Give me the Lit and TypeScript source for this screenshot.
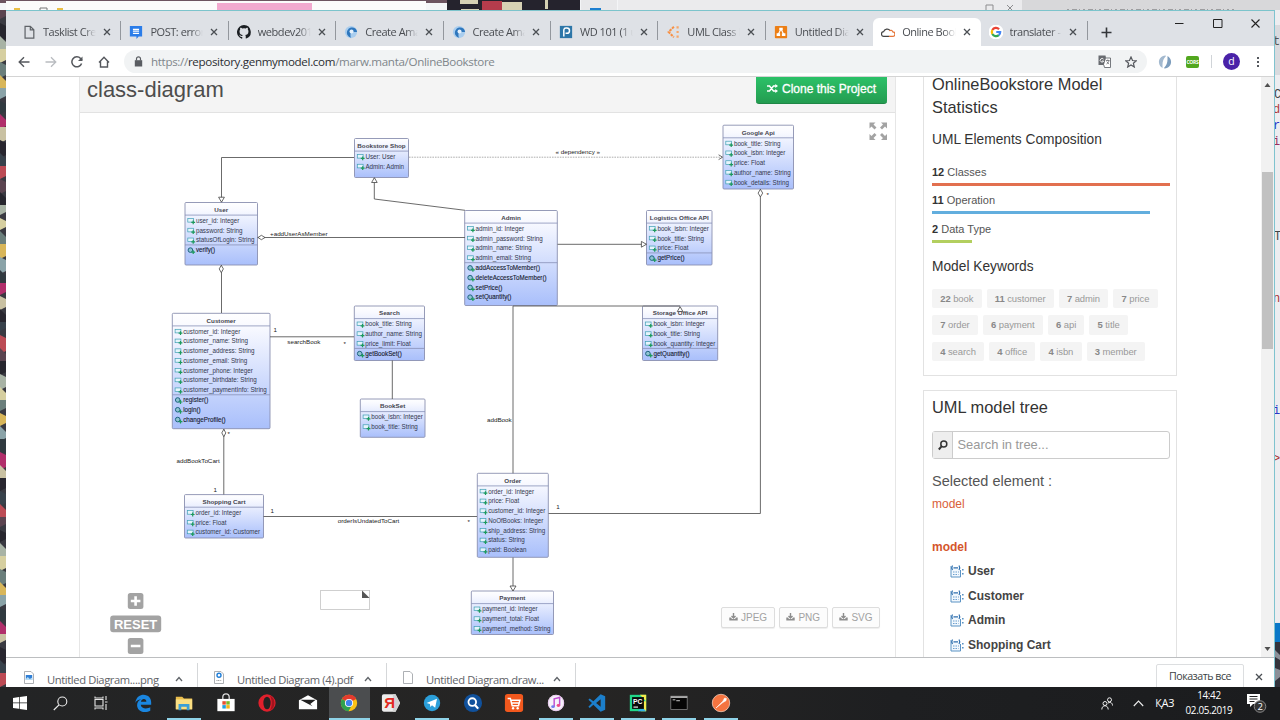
import { LitElement, html, svg, css } from "lit";
import { customElement } from "lit/decorators.js";

interface UmlClass {
  name: string;
  x: number;
  y: number;
  w: number;
  h: number;
  attrs: string[];
  ops?: string[];
}

const CLASSES: UmlClass[] = [
  { name: "Bookstore Shop", x: 354.5, y: 138.5, w: 54, h: 39, attrs: ["User: User", "Admin: Admin"] },
  { name: "User", x: 185, y: 202.5, w: 72.5, h: 62.5, attrs: ["user_id: Integer", "password: String", "statusOfLogin: String"], ops: ["verify()"] },
  { name: "Customer", x: 172.3, y: 313.3, w: 97.7, h: 115.4, attrs: ["customer_id: Integer", "customer_name: String", "customer_address: String", "customer_email: String", "customer_phone: Integer", "customer_birthdate: String", "customer_paymentInfo: String"], ops: ["register()", "login()", "changeProfile()"] },
  { name: "Search", x: 354.3, y: 306, w: 70.2, h: 54.5, attrs: ["book_title: String", "author_name: String", "price_limit: Float"], ops: ["getBookSet()"] },
  { name: "BookSet", x: 360.3, y: 399, w: 64.7, h: 38.3, attrs: ["book_isbn: Integer", "book_title: String"] },
  { name: "Shopping Cart", x: 184.5, y: 494.6, w: 79, h: 43.4, attrs: ["order_id: Integer", "price: Float", "customer_id: Customer"] },
  { name: "Admin", x: 464.7, y: 210.5, w: 92.6, h: 95, attrs: ["admin_id: Integer", "admin_password: String", "admin_name: String", "admin_email: String"], ops: ["addAccessToMember()", "deleteAccessToMember()", "setPrice()", "setQuantity()"] },
  { name: "Logistics Office API", x: 646.5, y: 210.5, w: 65.5, h: 54.5, attrs: ["book_isbn: Integer", "book_title: String", "price: Float"], ops: ["getPrice()"] },
  { name: "Storage Office API", x: 642.5, y: 306, w: 75.2, h: 54.5, attrs: ["book_isbn: Integer", "book_title: String", "book_quantity: Integer"], ops: ["getQuantity()"] },
  { name: "Order", x: 477.3, y: 473.3, w: 71, h: 84, attrs: ["order_id: Integer", "price: Float", "customer_id: Integer", "NoOfBooks: Integer", "ship_address: String", "status: String", "paid: Boolean"] },
  { name: "Payment", x: 471.3, y: 591, w: 82.2, h: 43.5, attrs: ["payment_id: Integer", "payment_total: Float", "payment_method: String"] },
  { name: "Google Api", x: 723, y: 125.2, w: 70.5, h: 63.8, attrs: ["book_title: String", "book_isbn: Integer", "price: Float", "author_name: String", "book_details: String"] },
];

const EDGES = [
  "M354 157.5H221.5V202",
  "M465 210.3L374.3 199V178",
  "M257.5 237.5H465",
  "M221.5 265V313",
  "M270 336.8H354",
  "M392.3 360.5V399",
  "M223.8 429V494.5",
  "M263.5 516.5H477",
  "M557.5 244.3H646.5",
  "M513 473.3V306H680",
  "M513 557.5V591",
  "M548.5 513.5H760.4V189",
];

const LABELS: [number, number, string][] = [
  [270, 235.5, "+addUserAsMember"],
  [555.5, 153.7, "« dependency »"],
  [273.5, 332, "1"],
  [287.3, 344, "searchBook"],
  [343.6, 345.8, "*"],
  [227.5, 435.5, "*"],
  [176.6, 462.8, "addBookToCart"],
  [213.5, 492.3, "1"],
  [270.5, 513.3, "1"],
  [337.8, 523.3, "orderIsUndatedToCart"],
  [467.5, 523.5, "*"],
  [556.3, 509.4, "1"],
  [487, 421.6, "addBook"],
  [766.5, 196.5, "*"],
];

const ROW = 9.77;

@customElement("uml-diagram")
export class UmlDiagram extends LitElement {
  static styles = css`
    :host { display: block; }
    svg { display: block; font-family: "Liberation Sans", Arial, sans-serif; }
    .edge { fill: none; stroke: #5a5a5a; stroke-width: 0.9; }
    .dash { stroke: #999; stroke-dasharray: 1.6 1; stroke-width: 0.8; }
    .head { fill: #fff; stroke: #444; stroke-width: 0.8; }
    .box { fill: url(#g); stroke: #8a90b0; stroke-width: 0.9; }
    .rule { stroke: #8890b8; stroke-width: 0.8; }
    .name { font-size: 6.25px; font-weight: 700; fill: #44444e; text-anchor: middle; }
    .attr { font-size: 6.27px; fill: #33384e; }
    .op { font-size: 6.27px; fill: #14182c; stroke: #14182c; stroke-width: 0.1; }
    .label { font-size: 6.25px; fill: #222; }
  `;

  private node(c: UmlClass) {
    const tx = c.x + 10.9;
    const first = c.y + 18.2;
    const ops = c.ops ?? [];
    const split = first + c.attrs.length * ROW - 5.1;
    return svg`
      <rect class="box" x=${c.x} y=${c.y} width=${c.w} height=${c.h} rx="1"></rect>
      <path class="rule" d="M${c.x} ${c.y + 12.6}h${c.w}"></path>
      <text class="name" x=${c.x + c.w / 2} y=${c.y + 9.3}>${c.name}</text>
      ${c.attrs.map((a, i) => {
        const y = first + i * ROW;
        return svg`
          <rect x=${c.x + 2.8} y=${y - 2.2} width="5.8" height="3.6" fill="#e6f4fb" stroke="#3e9fb4" stroke-width=".7"></rect>
          <path d="M${tx - 4.6} ${y + 1.7}h3.8M${tx - 2.7} ${y - 0.2}v3.8" stroke="#1d9a5c" stroke-width="1.2"></path>
          <text class="attr" x=${tx} y=${y + 2.1}>${a}</text>`;
      })}
      ${ops.length ? svg`<path class="rule" d="M${c.x} ${split}h${c.w}"></path>` : ""}
      ${ops.map((o, i) => {
        const y = first + (c.attrs.length + i) * ROW + 0.3;
        return svg`
          <circle cx=${c.x + 5.4} cy=${y - 0.2} r="2.3" fill="#8fc3d2" stroke="#1f6480" stroke-width="1"></circle>
          <path d="M${tx - 4.6} ${y + 1.8}h3.8M${tx - 2.7} ${y - 0.1}v3.8" stroke="#1d9a5c" stroke-width="1.2"></path>
          <text class="op" x=${tx} y=${y + 2.1}>${o}</text>`;
      })}`;
  }

  render() {
    return html`<svg width="816" height="544" viewBox="80 113 816 544">
      <defs>
        <linearGradient id="g" x1="0" y1="0" x2="0" y2="1">
          <stop offset="0" stop-color="#ffffff"></stop>
          <stop offset=".12" stop-color="#f8f9ff"></stop>
          <stop offset="1" stop-color="#a9bffb"></stop>
        </linearGradient>
      </defs>
      ${CLASSES.map((c) => this.node(c))}
      ${EDGES.map((d) => svg`<path class="edge" d=${d}></path>`)}
      <path class="edge dash" d="M409 157.2H722"></path>
      <path class="head" d="M218.6 197.2h5.8l-2.9 5zM371.6 182.5h5.6l-2.8-4.8zM641.4 241.4v5.8l5-2.9zM677.3 311.5h5.6l-2.8-4.8zM510 586h6l-3 5zM258 237.5l3.4-2.2 3.6 2.2-3.6 2.2zM221.3 265.3l2.1 3.6-2.1 3.8-2.1-3.8zM223.8 429.3l2 3.6-2 3.8-2-3.8zM760.4 189.3l2.3 3.8-2.3 3.8-2.3-3.8z"></path>
      <path class="edge" d="M718.6 154.8l4 2.4-4 2.4"></path>
      ${LABELS.map(([x, y, t]) => svg`<text class="label" x=${x} y=${y}>${t}</text>`)}
      <rect x="320.6" y="590.6" width="49" height="19" fill="#fff" stroke="#c4c4c4" stroke-width=".8"></rect>
      <path d="M362 590.6l7.6 7.4H362z" fill="#555"></path>
      <g fill="#a3a3a3">
        <path d="M869.5 122.5h6l-2 2 3 3-2 2-3-3-2 2zM887 122.5h-6l2 2-3 3 2 2 3-3 2 2zM869.5 140h6l-2-2 3-3-2-2-3 3-2-2zM887 140h-6l2-2-3-3 2-2 3 3 2-2z"></path>
        <rect x="127.8" y="593" width="15.6" height="16" rx="2.5"></rect>
        <rect x="110.2" y="615.4" width="51" height="16.8" rx="3"></rect>
        <rect x="127.8" y="638" width="15.6" height="16" rx="2.5"></rect>
      </g>
      <path d="M130.8 601h9.6M135.6 596.2v9.6M130.8 646h9.6" stroke="#fff" stroke-width="2.6"></path>
      <text x="135.6" y="628.5" text-anchor="middle" font-size="13" font-weight="700" fill="#fff">RESET</text>
    </svg>`;
  }
}

const createIcon = svg`<circle cx="8" cy="8" r="7" fill="#a9cdee"></circle><path d="M13 4A6 6 0 1 0 8 14.6 9 9 0 0 1 8 8h7A7 7 0 0 0 13 4z" fill="#2f77bd"></path><circle cx="8.6" cy="7.4" r="2.3" fill="#e4f0fb"></circle>`;

const FAVICONS = {
  page: svg`<path d="M3.500 1.500h6l4 4v9.500h-10zM9.500 1.500v4h4" fill="none" stroke="#5f6368" stroke-width="1.4"></path>`,
  post: svg`<path d="M1 1h14v12h-4l-2.500 3v-3H1z" fill="#2b7de9"></path><path d="M4.500 5h7M4.500 7h7M4.500 9.500h7" stroke="#fff" stroke-width="1.3"></path>`,
  github: svg`<path d="M8 0a8 8 0 0 0-2.500 15.600c.4.1.5-.2.5-.4v-1.500c-2.200.5-2.700-1-2.700-1-.4-.9-.9-1.200-.9-1.200-.7-.5.1-.5.1-.5.8.1 1.200.8 1.200.8.7 1.200 1.900.9 2.300.7.1-.5.300-.9.500-1.100-1.800-.2-3.600-.9-3.600-4 0-.9.300-1.600.8-2.200-.1-.2-.4-1 .1-2.100 0 0 .7-.2 2.200.8a7.500 7.500 0 0 1 4 0c1.500-1 2.200-.8 2.200-.8.4 1.100.200 1.900.1 2.100.5.600.8 1.300.8 2.200 0 3.100-1.900 3.800-3.700 4 .300.300.6.7.6 1.500v2.200c0 .2.100.5.500.4A8 8 0 0 0 8 0z" fill="#1b1f23"></path>`,
  create: createIcon,
  p: svg`<rect x="1" y="1" width="14" height="14" fill="#2d76a8"></rect><path d="M5.500 13V5.500A2.500 2.500 0 0 1 8 3.500h1a3 3 0 0 1 0 6H7.500" fill="none" stroke="#fff" stroke-width="1.7"></path>`,
  uml: svg`<path d="M9 2L3 8l6 6" fill="none" stroke="#f79044" stroke-width="2.300" stroke-dasharray="3 1"></path><path d="M12 1.500h2.500v2.500H12zM12 6.800h2.500v2.400H12zM12 12h2.500v2.500H12z" fill="#f7a567"></path>`,
  drawio: svg`<rect x="1" y="1" width="14" height="14" rx="1" fill="#ec7f16"></rect><path d="M8 4.500L4.500 11.500M8 4.500l3.500 7" stroke="#fff" stroke-width="1.300"></path><path d="M6 3h4v3H6zM3 9.500h4v3H3zM9 9.500h4v3H9z" fill="#fff"></path>`,
  cloud: svg`<path d="M9.500 13H3.500A2.700 2.700 0 0 1 3 7.600C4 4.500 8.500 3.500 10.300 6.500" fill="none" stroke="#444" stroke-width="1.400"></path><path d="M9 13h4.200a2.600 2.600 0 0 0 .3-5.200C13 6 11 5.600 9.500 6.600" fill="none" stroke="#e5763a" stroke-width="1.400"></path>`,
  google: svg`<circle cx="8" cy="8" r="8.500" fill="#fff"></circle><g fill="none" stroke-width="2.500"><path d="M11.500 4.800A4.800 4.800 0 0 0 3.800 5.700" stroke="#ea4335"></path><path d="M3.800 5.700a4.800 4.800 0 0 0 0 4.600" stroke="#fbbc05"></path><path d="M3.800 10.300a4.800 4.800 0 0 0 7.400 1.300" stroke="#34a853"></path><path d="M11.200 11.600A4.800 4.800 0 0 0 12.800 8H8.300" stroke="#4285f4"></path></g>`,
};

const TABS: { icon: keyof typeof FAVICONS; text: string; active?: boolean; line?: boolean }[] = [
  { icon: "page", text: "Tasklist Creation", line: true },
  { icon: "post", text: "POST: error code", line: true },
  { icon: "github", text: "webdev2019/task", line: true },
  { icon: "create", text: "Create Amazing", line: true },
  { icon: "create", text: "Create Amazing", line: true },
  { icon: "p", text: "WD 101 (1 unread", line: true },
  { icon: "uml", text: "UML Class Diagr", line: true },
  { icon: "drawio", text: "Untitled Diagram" },
  { icon: "cloud", text: "Online Bookstore", active: true },
  { icon: "google", text: "translater - Поиск", line: true },
];

const STATS = [
  { n: 12, label: "Classes", width: 238, color: "#e2704f" },
  { n: 11, label: "Operation", width: 218.3, color: "#62aede" },
  { n: 2, label: "Data Type", width: 39.6, color: "#b3cf5f" },
];

const KEYWORDS: [number, string][][] = [
  [[22, "book"], [11, "customer"], [7, "admin"], [7, "price"]],
  [[7, "order"], [6, "payment"], [6, "api"], [5, "title"]],
  [[4, "search"], [4, "office"], [4, "isbn"], [3, "member"]],
];

const TREE = ["User", "Customer", "Admin", "Shopping Cart"];

const APPS: { art: unknown; open?: boolean; active?: boolean }[] = [
  { art: svg`<path d="M1.500 10C2.500 3 7 1 10.500 1 16 1 19 5 19 9.500V12H7.500c.3 3 3 4 5.500 4 2 0 3.700-.5 5-1.300v3.800C16.500 19.500 14.500 20 12 20 6.500 20 3.500 16.500 3.500 12.500c0-3 1.700-5.300 4.500-6.500C4.500 6.500 2.500 8 1.500 10zM7.800 8.500h5.900C13.700 6.500 12.500 5.500 11 5.500S8 6.500 7.800 8.500z" fill="#1a86e0"></path>` },
  { art: svg`<path d="M1 3h7l2 2h9v12H1z" fill="#e9bd4c"></path><path d="M1 6h18v11H1z" fill="#fbdf83"></path><path d="M4 18v-7h12v7h-3v-4H7v4z" fill="#3c9fd6"></path>`, open: true },
  { art: svg`<path d="M6.500 6V3.500a3.500 3.500 0 0 1 7 0V6" fill="none" stroke="#ddd" stroke-width="1.400"></path><path d="M0.500 5.500h19V19h-19z" fill="#fff"></path><path d="M6 8h3.800v3.800H6z" fill="#e8502f"></path><path d="M10.300 8h3.800v3.800h-3.800z" fill="#7cb928"></path><path d="M6 12.300h3.800v3.800H6z" fill="#219fdf"></path><path d="M10.300 12.300h3.800v3.800h-3.800z" fill="#f6b619"></path>` },
  { art: svg`<ellipse cx="10" cy="10" rx="9.500" ry="9.500" fill="#e0202c"></ellipse><ellipse cx="10" cy="10" rx="4" ry="7" fill="#232323"></ellipse><path d="M13 1.500a9.500 9.500 0 0 1 0 17c3-5 3-12 0-17z" fill="#a3131d"></path>` },
  { art: svg`<path d="M0 7l10-5.500L20 7v10H0z" fill="#fff"></path><path d="M1.500 6.300h17L12.500 11 15 13.500z" fill="#222"></path>` },
  { art: svg`<circle cx="10" cy="10" r="9" fill="#fbc116"></circle><path d="M10 10L2.200 5.500A9 9 0 0 1 17.800 5.500z" fill="#e33b2e"></path><path d="M10 10L2.200 5.500A9 9 0 0 0 9.500 19l4-7z" fill="#30a14e"></path><path d="M10 5.500h8a9 9 0 0 0-8-4.500z" fill="#e33b2e"></path><circle cx="10" cy="10" r="4.500" fill="#fff"></circle><circle cx="10" cy="10" r="3.500" fill="#3f83ee"></circle>`, open: true, active: true },
  { art: svg`<path d="M2 0.500h13L20 10l-5 9.500H2a2 2 0 0 1-2-2v-15a2 2 0 0 1 2-2z" fill="#ececec"></path><path d="M12 0.500h3L20 10l-5 9.500h-3z" fill="#d2d2d2"></path><text x="2.500" y="16" font-size="16.500" font-weight="700" fill="#e22b22" font-family="Liberation Sans, sans-serif">Я</text>` },
  { art: svg`<circle cx="10" cy="10" r="9" fill="#2b9fda"></circle><path d="M4 10l11.500-4.800-2 10-3.500-2.600-1.800 1.800-.5-3.200z" fill="#fff"></path>`, open: true },
  { art: svg`<circle cx="10" cy="10" r="10" fill="#10519c"></circle><circle cx="9.200" cy="9" r="4.200" fill="none" stroke="#fff" stroke-width="2"></circle><path d="M12.200 12.200l3.500 4" stroke="#fff" stroke-width="2.400"></path>` },
  { art: svg`<rect x="0" y="0" width="20" height="20" rx="3" fill="#f2581d"></rect><path d="M3 5h3l2 8h7l1.500-6H7M8 10h8" fill="none" stroke="#fff" stroke-width="1.600"></path><circle cx="9" cy="15.800" r="1.300" fill="#fff"></circle><circle cx="14" cy="15.800" r="1.300" fill="#fff"></circle>` },
  { art: svg`<circle cx="10" cy="10" r="9" fill="#f6f2fa"></circle><circle cx="10" cy="10" r="8.400" fill="none" stroke="#e7c6ec" stroke-width="1"></circle><path d="M8 14V5.500l6-1.500v8.500" fill="none" stroke="#c04fd0" stroke-width="1.600"></path><ellipse cx="6.700" cy="14" rx="2" ry="1.600" fill="#6f7df0"></ellipse><ellipse cx="12.700" cy="12.700" rx="2" ry="1.600" fill="#ef4c86"></ellipse>`, open: true },
  { art: svg`<path d="M14 0.500l5 2v15l-5 2L6 12l-4 3.500L0.500 14 4.500 10 0.500 6.500 2 5l4 3zM14 6l-5 4 5 4z" fill="#1c7fcb"></path>`, open: true },
  { art: svg`<path d="M1 1h18v18H1z" fill="#21d789"></path><path d="M12 1h7v7zM14 8h5v11h-6z" fill="#f4ec4b"></path><path d="M10 19h9l-5-5z" fill="#31b5e8"></path><path d="M3.500 3.500h13v13h-13z" fill="#0a0a0a"></path><text x="4.600" y="10.800" font-size="7.500" font-weight="700" fill="#fff" font-family="Liberation Sans, sans-serif">PC</text><path d="M5 14.500h5" stroke="#fff" stroke-width="1.200"></path>`, open: true },
  { art: svg`<rect x="1" y="2.500" width="18" height="14.500" fill="#060606" stroke="#8b8b8b" stroke-width=".8"></rect><path d="M1 3.500h18" stroke="#cfcfcf" stroke-width="1.600"></path><path d="M3 6.500h3M7 7.500h4" stroke="#ddd" stroke-width="1"></path>`, open: true },
  { art: svg`<circle cx="10" cy="10" r="9.600" fill="#f57440" stroke="#fbd5c2" stroke-width=".8"></circle><path d="M4.500 15.500L12 8l2-3.500 2 .5-.5 2.500L12 9.500z" fill="#fff" stroke="#fff" stroke-width=".6"></path>`, open: true },
];

const chevron = html`<svg class="chev" width="8" height="6" viewBox="0 0 8 6"><path d="M1 5l3-3.500L7 5" fill="none" stroke="#5f6368" stroke-width="1.300"></path></svg>`;
const cross = html`<svg class="cross" width="8" height="8" viewBox="0 0 8 8"><path d="M1 1l6 6M7 1L1 7" stroke="#4b4f54" stroke-width="1.300"></path></svg>`;

@customElement("app-root")
export class AppRoot extends LitElement {
  static styles = css`
    :host {
      display: block; position: relative; width: 1280px; height: 720px; overflow: hidden;
      background: #e8e8ea; font-family: "Liberation Sans", Arial, sans-serif; color: #444;
    }
    * { box-sizing: border-box; }
    svg { display: block; flex: none; }
    .backdrop { position: absolute; left: 0; top: 0; }
    .window {
      position: relative; margin: 10px 5px 0 6px; height: 677px; display: flex; flex-direction: column;
      background: #fff; border-top: 1px solid #7cc4cc; border-right: 1px solid #7fc3cf; overflow: hidden;
    }
    .ui { font-family: "Open Sans", "Noto Sans", sans-serif; }

    .tabs { height: 35px; flex: none; background: #dee1e6; display: flex; padding-left: 8px; }
    .tab { width: 107.4px; margin-top: 7px; height: 28px; display: flex; align-items: center; padding: 0 9.500px 0 8px; }
    .tab.active { background: #fff; border-radius: 6px 6px 0 0; }
    .tab .label { flex: 1; min-width: 0; margin: 0 6px 0 7px; font-size: 11px; letter-spacing: -0.45px; color: #4a4d52; white-space: nowrap; overflow: hidden; line-height: 18px;
      mask-image: linear-gradient(90deg, #000 76%, transparent 98%); }
    .tab.line { border-right: 1px solid #93979d; border-image: linear-gradient(transparent 15%, #93979d 15%, #93979d 75%, transparent 75%) 1; }
    .plus { margin: 16px 0 0 13px; }
    .controls { margin: 4px 0 0 auto; display: flex; gap: 28.500px; padding: 4px 14px 0 0; }

    .bar { height: 30px; flex: none; display: flex; align-items: center; padding: 1px 0 0 12px; background: #fff; }
    .nav { display: flex; gap: 14.500px; align-items: center; width: 106px; }
    .pill { width: 1023px; height: 23.500px; background: #f1f3f4; border-radius: 12px; display: flex; align-items: center; padding: 0 10px; }
    .url { font-size: 11.600px; letter-spacing: -0.33px; color: #80868b; margin-left: 8px; flex: 1; white-space: nowrap; line-height: 20px; }
    .url b { font-weight: 400; color: #2b2e32; }
    .pill-icons { display: flex; gap: 14px; align-items: center; }
    .ext { display: flex; align-items: center; }
    .swirl { margin-left: 11px; }
    .cors { background: #52a71e; color: #fff; font-size: 5px; letter-spacing: -0.3px; font-weight: 700; width: 13px; height: 12px; line-height: 12px; border-radius: 2px; text-align: center; margin-left: 14px; }
    .avatar { width: 17px; height: 17px; border-radius: 50%; background: #4a22a8; color: #fff; font-size: 10.500px; line-height: 16px; text-align: center; margin: 0 16px 0 11px; }
    .vr { width: 1px; height: 13px; background: #d0d4d8; margin-left: 12px; }

    .page { height: 581px; flex: none; border-top: 1px solid #d4d4d4; display: flex; overflow: hidden; background: #fff; }
    .main { margin-left: 73px; width: 817px; border: solid #e6e6e6; border-width: 0 1px; position: relative; }
    .head { height: 36px; background: #f4f4f4; border-bottom: 1px solid #e2e2e2; display: flex; justify-content: space-between; padding: 0 8px 0 7px; }
    .head h1 { margin: 0; font-size: 22px; font-weight: 400; line-height: 26px; color: #4d4d4d; }
    .clone { width: 131px; height: 26.500px; border-radius: 0 0 3px 3px; background: linear-gradient(#2cc168, #239c50); border-bottom: 1px solid #1f8746; color: #fff; font-size: 12px; display: flex; gap: 4px; justify-content: center; padding-top: 5px; line-height: 14px; -webkit-text-stroke: 0.3px #fff; white-space: nowrap; }
    .clone svg { margin-top: 2px; }
    .exports { position: absolute; right: 15px; bottom: 29px; display: flex; gap: 4.300px; }
    .exports span { height: 21.500px; border: 1px solid #ddd; border-radius: 2px; padding: 0 6.500px; display: flex; gap: 3px; align-items: center; font-size: 10px; color: #a2a2a2; background: #fcfcfc; box-shadow: 0 1px 1px #eee; }

    .side { margin-left: 27px; width: 254px; display: flex; flex-direction: column; gap: 14px; }
    .card { border: 1px solid #e2e2e2; padding: 0 8px; flex: none; }
    .card.stats { height: 299px; border-top: 0; }
    .card.tree { height: 300px; }
    h2 { margin: 0; font-weight: 400; font-size: 16.400px; line-height: 22.500px; color: #333; }
    .stats h2 { margin-top: -4px; }
    h3 { margin: 11.500px 0 15px; font-weight: 400; font-size: 13.750px; line-height: 20px; color: #333; white-space: nowrap; }
    h3.kw { margin: 6.500px 0 12px; }
    .stat { height: 28.650px; font-size: 11px; line-height: 14px; color: #555; }
    .stat b { color: #333; }
    .meter { height: 3px; margin-top: 4px; }
    .tags { display: flex; gap: 5px; margin-bottom: 6.900px; }
    .tag { height: 19.500px; line-height: 19.500px; padding: 0 8.200px; background: #f4f4f4; border-radius: 2px; font-size: 9.450px; letter-spacing: -0.06px; color: #999; }
    .tag b { color: #888; }
    .tree h2 { padding-top: 5px; height: 28px; }
    .search { height: 28px; width: 238px; margin-top: 12px; border: 1px solid #ccc; border-radius: 3px; display: flex; font-size: 12.900px; line-height: 25px; color: #999; }
    .search i { width: 20px; background: #eee; border-right: 1px solid #ccc; margin-right: 4.500px; padding: 8px 0 0 5px; }
    .sel { font-size: 14.500px; line-height: 20px; margin-top: 12px; color: #555; }
    .link { font-size: 12px; line-height: 16px; margin-top: 5px; color: #d9603a; }
    .root { font-size: 12px; line-height: 16px; margin-top: 27px; margin-bottom: 4px; color: #d4562d; font-weight: 700; }
    .leaf { height: 24.600px; display: flex; align-items: center; gap: 4px; padding-left: 18px; font-size: 12px; font-weight: 700; color: #444; }
    .scroll { margin-left: auto; width: 13px; background: #f1f1f1; display: flex; flex-direction: column; }
    .scroll svg { margin: 5px 0 0 3px; }
    .thumb { height: 177px; background: #c1c1c1; margin: 84px 1px 0; }
    .scroll .down { margin-top: auto; margin-bottom: 5px; }

    .downloads { height: 30px; flex: none; border-top: 1px solid #bcbec0; display: flex; background: #fff; font-size: 11.200px; color: #5f6368; }
    .dl { display: flex; height: 29px; margin-top: 5px; align-items: center; border-right: 1px solid #d5d7d9; padding: 5px 14px 0 16px; }
    .dl:first-child { padding-left: 18px; }
    .dl span { margin-left: 13px; flex: 1; white-space: nowrap; line-height: 18px; letter-spacing: -0.39px; }
    .dl .file { margin-bottom: 5px; }
    .dl .chev { margin-bottom: 3px; }
    .all { margin: 6px 11px 0 auto; width: 88px; height: 30px; border: 1px solid #dcdee0; border-radius: 2px; text-align: center; line-height: 23px; font-size: 10.700px; letter-spacing: -0.5px; color: #3c3f44; white-space: nowrap; }
    .downloads .cross { margin: 15px 11px 0 0; }

    .taskbar { position: relative; height: 33px; background: linear-gradient(90deg, #232425, #262524 45%, #1e1f21 70%, #1b1c1e); display: flex; color: #fff; }
    .sys { display: flex; align-items: center; width: 122.400px; padding: 0 0 1px 13px; gap: 26px; }
    .app { width: 41.280px; display: flex; flex-direction: column; align-items: center; padding-top: 6px; }
    .app.active { background: #4b4d4f; }
    .app u { height: 2.500px; width: 34px; background: #8fd3e8; margin-top: auto; }
    .app.active u { width: 41px; }
    .tray { margin-left: auto; display: flex; align-items: center; font-size: 10.500px; padding: 0 13px 1px 0; }
    .clock { font-size: 9.900px; line-height: 15px; text-align: center; width: 50px; letter-spacing: -0.35px; margin: 0 13px 0 10px; white-space: nowrap; }
    .caret { margin-left: 20px; }
    .lang { margin-left: 11px; letter-spacing: -0.3px; }
  `;

  private backdrop() {
    const left = ["#5b4450", "#b12f6b", "#d6cfa0", "#38424c", "#8aa3a8", "#27262e", "#c9c1a2", "#6b7f7c", "#bc4b55", "#303a40", "#a8b3a5", "#28262f", "#d8b65a"];
    return html`<svg class="backdrop" width="1280" height="687" viewBox="0 0 1280 687">
      <rect width="1280" height="12" fill="#f4f5f7"></rect>
      <rect width="447" height="3" fill="#6d5460"></rect>
      <rect x="6" y="1" width="420" height="10" fill="#fbfbfb"></rect>
      <rect x="217" y="3" width="95" height="8" fill="#f2a9cf"></rect>
      <path d="M14 8h6v3h-6zM57 8h6v3h-6z" fill="#eabf45"></path>
      <path d="M40 11V8h7v3" fill="none" stroke="#777"></path>
      <path d="M447 0h133v11H447z" fill="#25232d"></path>
      <path d="M460 0h18v4h-18zM502 2h20v9h-20zM548 0h-3v9h3zM461 9h18v2h-18z" fill="#d6d1b4"></path>
      <path d="M482 1h20v10h-20z" fill="#b53c4c"></path>
      <path d="M581 0h36v11h-36z" fill="#e8e8ea"></path>
      <path d="M590 8h11v3h-11z" fill="#1d7fd0"></path>
      <path d="M618 0h404v11H618z" fill="#ebebed"></path>
      <path d="M986 11V5h7v6M1007 5l6 6M1013 5l-6 6" fill="none" stroke="#8d8d8f"></path>
      <path d="M1022 0h258v11h-258z" fill="#d8d8da"></path>
      <path d="M1067 10h167" stroke="#8b8b8d" stroke-width="1.500" stroke-dasharray="2 3 5 2 1 3"></path>
      <rect y="10" width="6" height="677" fill="#3a3a42"></rect>
      ${Array.from({ length: 52 }, (_, i) => svg`<path d="M0 ${10 + i * 13}l6 ${(i % 3) * 3}v${6 + ((i * 7) % 8)}l-6 3z" fill=${left[(i * 5) % 13]}></path>`)}
      <rect x="1275" y="10" width="5" height="612" fill="#ededf0"></rect>
      <rect x="1275" y="25" width="5" height="50" fill="#d9dade"></rect>
      <g font-family="Liberation Mono, monospace" font-size="12">
        <text x="1273" y="45" fill="#555">t.</text>
        <text x="1274" y="98" fill="#444">C</text>
        <text x="1273" y="113" fill="#b03a3a">d</text>
        <text x="1273" y="129" fill="#2a35c9">r</text>
        <text x="1273" y="145" fill="#9b2f5c">i</text>
        <text x="1274" y="240" fill="#444">T</text>
        <text x="1273" y="302" fill="#a33">n</text>
        <text x="1273" y="414" fill="#2a35c9">i</text>
        <text x="1273" y="462" fill="#a33">&gt;</text>
      </g>
      <rect x="1275" y="623" width="5" height="19" fill="#0a78c8"></rect>
      <rect x="1275" y="642" width="5" height="45" fill="#33333c"></rect>
      <path d="M1275 650l5 5v5l-5-3zM1275 668l5 2v7l-5 4z" fill="#8b8f98"></path>
    </svg>`;
  }

  private tabStrip() {
    return html`<div class="tabs ui">
      ${TABS.map((t) => html`<div class="tab ${t.active ? "active" : ""} ${t.line ? "line" : ""}">
        <svg width="14" height="14" viewBox="0 0 16 16">${FAVICONS[t.icon]}</svg>
        <span class="label">${t.text}</span>${cross}
      </div>`)}
      <svg class="plus" width="11" height="11" viewBox="0 0 11 11"><path d="M0.500 5.500h10M5.500 0.500v10" stroke="#33363a" stroke-width="1.600"></path></svg>
      <div class="controls">
        <svg width="10" height="9" viewBox="0 0 10 9"><path d="M1 4.500h8.500" stroke="#222" stroke-width="1"></path></svg>
        <svg width="10" height="9" viewBox="0 0 10 9"><path d="M.5.5h8.500v8H.5z" fill="none" stroke="#222" stroke-width="1"></path></svg>
        <svg width="9" height="9" viewBox="0 0 9 9"><path d="M.5.5l8 8M8.500.5l-8 8" stroke="#222" stroke-width="1.100"></path></svg>
      </div>
    </div>`;
  }

  private toolbar() {
    return html`<div class="bar ui">
      <div class="nav">
        <svg width="12" height="12" viewBox="0 0 12 12"><path d="M11.500 6H1.500M6 1.200L1.200 6 6 10.800" fill="none" stroke="#55585d" stroke-width="1.400"></path></svg>
        <svg width="12" height="12" viewBox="0 0 12 12"><path d="M.5 6h10M6 1.200L10.800 6 6 10.800" fill="none" stroke="#b9bcc0" stroke-width="1.300"></path></svg>
        <svg width="12" height="12" viewBox="0 0 12 12"><path d="M10.600 7.500A5 5 0 1 1 9.600 2.500L11 4" fill="none" stroke="#55585d" stroke-width="1.500"></path><path d="M11.500.5v4.500H7z" fill="#55585d"></path></svg>
        <svg width="12" height="12" viewBox="0 0 12 12"><path d="M1 6.500L6 1.300l5 5.200M2.500 5.500v5.500h7V5.500" fill="none" stroke="#55585d" stroke-width="1.400"></path></svg>
      </div>
      <div class="pill">
        <svg width="9" height="11" viewBox="0 0 9 11"><path d="M.8 4.200h7.400V10.500H.8z" fill="#5a5d62"></path><path d="M2.500 4.500V2.800a2 2 0 0 1 4 0v1.700" fill="none" stroke="#5a5d62" stroke-width="1.200"></path></svg>
        <div class="url">https://<b>repository.genmymodel.com</b>/marw.manta/OnlineBookstore</div>
        <div class="pill-icons">
          <svg width="13" height="13" viewBox="0 0 13 13"><path d="M.5.5h7l2 9.500h-9z" fill="#686b70"></path><path d="M8 3h4.500v9.500H6.500L5.800 10" fill="#fff" stroke="#686b70" stroke-width=".9"></path><path d="M5.500 4.200A1.800 1.800 0 1 0 5.700 6H4" fill="none" stroke="#fff" stroke-width=".9"></path><path d="M8 5.500h3.500M9.800 4.500v1M11 5.500c-.3 2-1.500 3-2.500 3.500M8.700 6.500l2.300 2.700" fill="none" stroke="#686b70" stroke-width=".8"></path></svg>
          <svg width="12" height="12" viewBox="0 0 12 12"><path d="M6 1l1.500 3.500 3.800.300-2.900 2.500.9 3.700L6 9l-3.300 2 .9-3.700L.7 4.800l3.800-.3z" fill="none" stroke="#55585d" stroke-width="1.200"></path></svg>
        </div>
      </div>
      <div class="ext">
        <svg class="swirl" width="14" height="14" viewBox="0 0 14 14"><path d="M7.500.5C3 1 .5 4 1 8c.3 2 1.500 4 3.500 5L4.500 9.500c0-3 1-6 3.500-8.500z" fill="#a3b9cf"></path><path d="M6.500 13.500c4.500-.5 7-3.500 6.500-7.500-.3-2-1.500-4-3.500-5v3.500c0 3-1 6-3.500 8.500z" fill="#7d9dbd"></path></svg>
        <div class="cors">CORS</div>
        <div class="vr"></div>
        <div class="avatar">d</div>
        <svg width="4" height="12" viewBox="0 0 4 12"><path d="M1 1h2v2H1zM1 5h2v2H1zM1 9h2v2H1z" fill="#55585d"></path></svg>
      </div>
    </div>`;
  }

  private sidebar() {
    return html`<div class="side">
      <section class="card stats">
        <h2>OnlineBookstore Model<br />Statistics</h2>
        <h3>UML Elements Composition</h3>
        ${STATS.map((s) => html`<div class="stat"><b>${s.n}</b> ${s.label}
          <div class="meter" style="width:${s.width}px;background:${s.color}"></div></div>`)}
        <h3 class="kw">Model Keywords</h3>
        ${KEYWORDS.map((row) => html`<div class="tags">${row.map(([n, w]) => html`<span class="tag"><b>${n}</b> ${w}</span>`)}</div>`)}
      </section>
      <section class="card tree">
        <h2>UML model tree</h2>
        <div class="search"><i><svg width="10" height="11" viewBox="0 0 10 11"><circle cx="5.800" cy="4" r="3" fill="none" stroke="#333" stroke-width="1.500"></circle><path d="M3.800 6.200L.8 9.500" stroke="#333" stroke-width="2"></path></svg></i>Search in tree...</div>
        <div class="sel">Selected element :</div>
        <div class="link">model</div>
        <div class="root">model</div>
        ${TREE.map((t) => html`<div class="leaf">
          <svg width="14" height="14" viewBox="0 0 14 14"><path d="M1 2v11h9.500V6" fill="#f2f8fd" stroke="#5b93c4" stroke-width="1"></path><path d="M2.500 1.500C1.500 3 1.500 4.500 2.500 6M9 1.500c1 1.500 1 3 0 4.500M3.500 3.800h4.500" fill="none" stroke="#2f6fae" stroke-width="1.200"></path><path d="M3 8h6M3 10.500h5.500" stroke="#6c9fce" stroke-dasharray="1.500 1"></path><path d="M12 5h1.600v1.600H12zM12 9h1.600v1.600H12z" fill="#5b93c4"></path></svg>
          ${t}</div>`)}
      </section>
    </div>`;
  }

  private fileIcon(kind: string) {
    return html`<svg class="file" width="10" height="13" viewBox="0 0 10 13"><path d="M.5.5h6.500l2.500 2.500v9.500h-9z" fill="#fff" stroke="#a4a7ab" stroke-width=".9"></path>
      ${kind === "png" ? svg`<path d="M1.800 4h6.400v5H1.800z" fill="#2f7fd6"></path><path d="M1.800 8l2-2 2 2 2.400-1.500V9H1.800z" fill="#b5dcf5"></path>` : ""}
      ${kind === "pdf" ? svg`<circle cx="5" cy="4.300" r="2" fill="none" stroke="#1f7ed8" stroke-width="1.400"></circle><path d="M2.500 9.500h5" stroke="#999" stroke-dasharray="1 .6"></path>` : ""}
    </svg>`;
  }

  render() {
    const files: [string, string, number][] = [["png", "Untitled Diagram....png", 192], ["pdf", "Untitled Diagram (4).pdf", 189], ["page", "Untitled Diagram.draw...", 189]];
    const dlIcon = html`<svg width="9" height="8" viewBox="0 0 9 8"><path d="M4.500 0v4M2.500 3l2 2 2-2" fill="none" stroke="#8d8d8d" stroke-width="1.400"></path><path d="M.3 4.500h1.700l1 1.500h3l1-1.500h1.700v3H.3z" fill="#8d8d8d"></path></svg>`;
    return html`
      ${this.backdrop()}
      <div class="window">
        ${this.tabStrip()} ${this.toolbar()}
        <div class="page">
          <div class="main">
            <div class="head">
              <h1>class-diagram</h1>
              <div class="clone"><svg width="11" height="9" viewBox="0 0 11 9"><path d="M0 2h2.500L6.500 7H9M0 7h2.500L6.500 2H9" fill="none" stroke="#fff" stroke-width="1.500"></path><path d="M8.300 0L11 2 8.300 4zM8.300 5L11 7 8.300 9z" fill="#fff"></path></svg>Clone this Project</div>
            </div>
            <uml-diagram></uml-diagram>
            <div class="exports">${["JPEG", "PNG", "SVG"].map((f) => html`<span>${dlIcon}${f}</span>`)}</div>
          </div>
          ${this.sidebar()}
          <div class="scroll">
            <svg width="7" height="6" viewBox="0 0 7 6"><path d="M.5 5l3-4 3 4z" fill="#505050"></path></svg>
            <div class="thumb"></div>
            <svg class="down" width="7" height="6" viewBox="0 0 7 6"><path d="M.5 1l3 4 3-4z" fill="#505050"></path></svg>
          </div>
        </div>
        <div class="downloads ui">
          ${files.map(([k, n, w]) => html`<div class="dl" style="width:${w}px">${this.fileIcon(k)}<span>${n}</span>${chevron}</div>`)}
          <div class="all">Показать все</div>
          ${cross}
        </div>
      </div>
      <div class="taskbar ui">
        <div class="sys">
          <svg width="14" height="14" viewBox="0 0 14 14"><path d="M0 2l6-.9v5.500H0zM6.700 1L14 0v6.600H6.700zM0 7.300h6v5.500L0 12zM6.700 7.300H14V14l-7.300-1z" fill="#fff"></path></svg>
          <svg width="15" height="15" viewBox="0 0 15 15"><circle cx="9.300" cy="5.500" r="4.500" fill="none" stroke="#eee" stroke-width="1.100"></circle><path d="M6 8.800L.8 14" stroke="#eee" stroke-width="1.200"></path></svg>
          <svg width="14" height="14" viewBox="0 0 14 14"><path d="M1 3.500h8v6.500H1zM1 .5v1.500h8V.5M1 13.500V12h8v1.500M12 0v4M12 8v6M11 6h2.500" fill="none" stroke="#e6e6e6" stroke-width="1.100"></path></svg>
        </div>
        ${APPS.map((a) => html`<div class="app ${a.active ? "active" : ""}"><svg width="20" height="20" viewBox="-1 -1 22 22">${a.art}</svg>${a.open ? html`<u></u>` : ""}</div>`)}
        <div class="tray">
          <svg width="12" height="13" viewBox="0 0 12 13"><g fill="none" stroke="#eee" stroke-width="1"><circle cx="4" cy="6.500" r="2"></circle><path d="M.8 12.500c0-5 6.400-5 6.400 0"></path><circle cx="8.500" cy="2.800" r="2"></circle><path d="M7 6c3-1.500 4.500.5 4.500 2.500"></path></g></svg>
          <svg class="caret" width="11" height="7" viewBox="0 0 11 7"><path d="M.8 6L5.500 1l4.700 5" fill="none" stroke="#eee" stroke-width="1.100"></path></svg>
          <span class="lang">ҚАЗ</span>
          <div class="clock">14:42<br />02.05.2019</div>
          <svg width="20" height="20" viewBox="0 0 20 20"><path d="M0 1h13v10H6l-3 3v-3H0z" fill="#fff"></path><path d="M2.500 3.500h8M2.500 6h8M2.500 8.500h5" stroke="#222" stroke-width="1"></path><circle cx="13" cy="13.500" r="5.800" fill="#333" stroke="#888" stroke-width="1"></circle><text x="10.500" y="17" font-size="9.500" fill="#fff">2</text></svg>
        </div>
      </div>`;
  }
}
